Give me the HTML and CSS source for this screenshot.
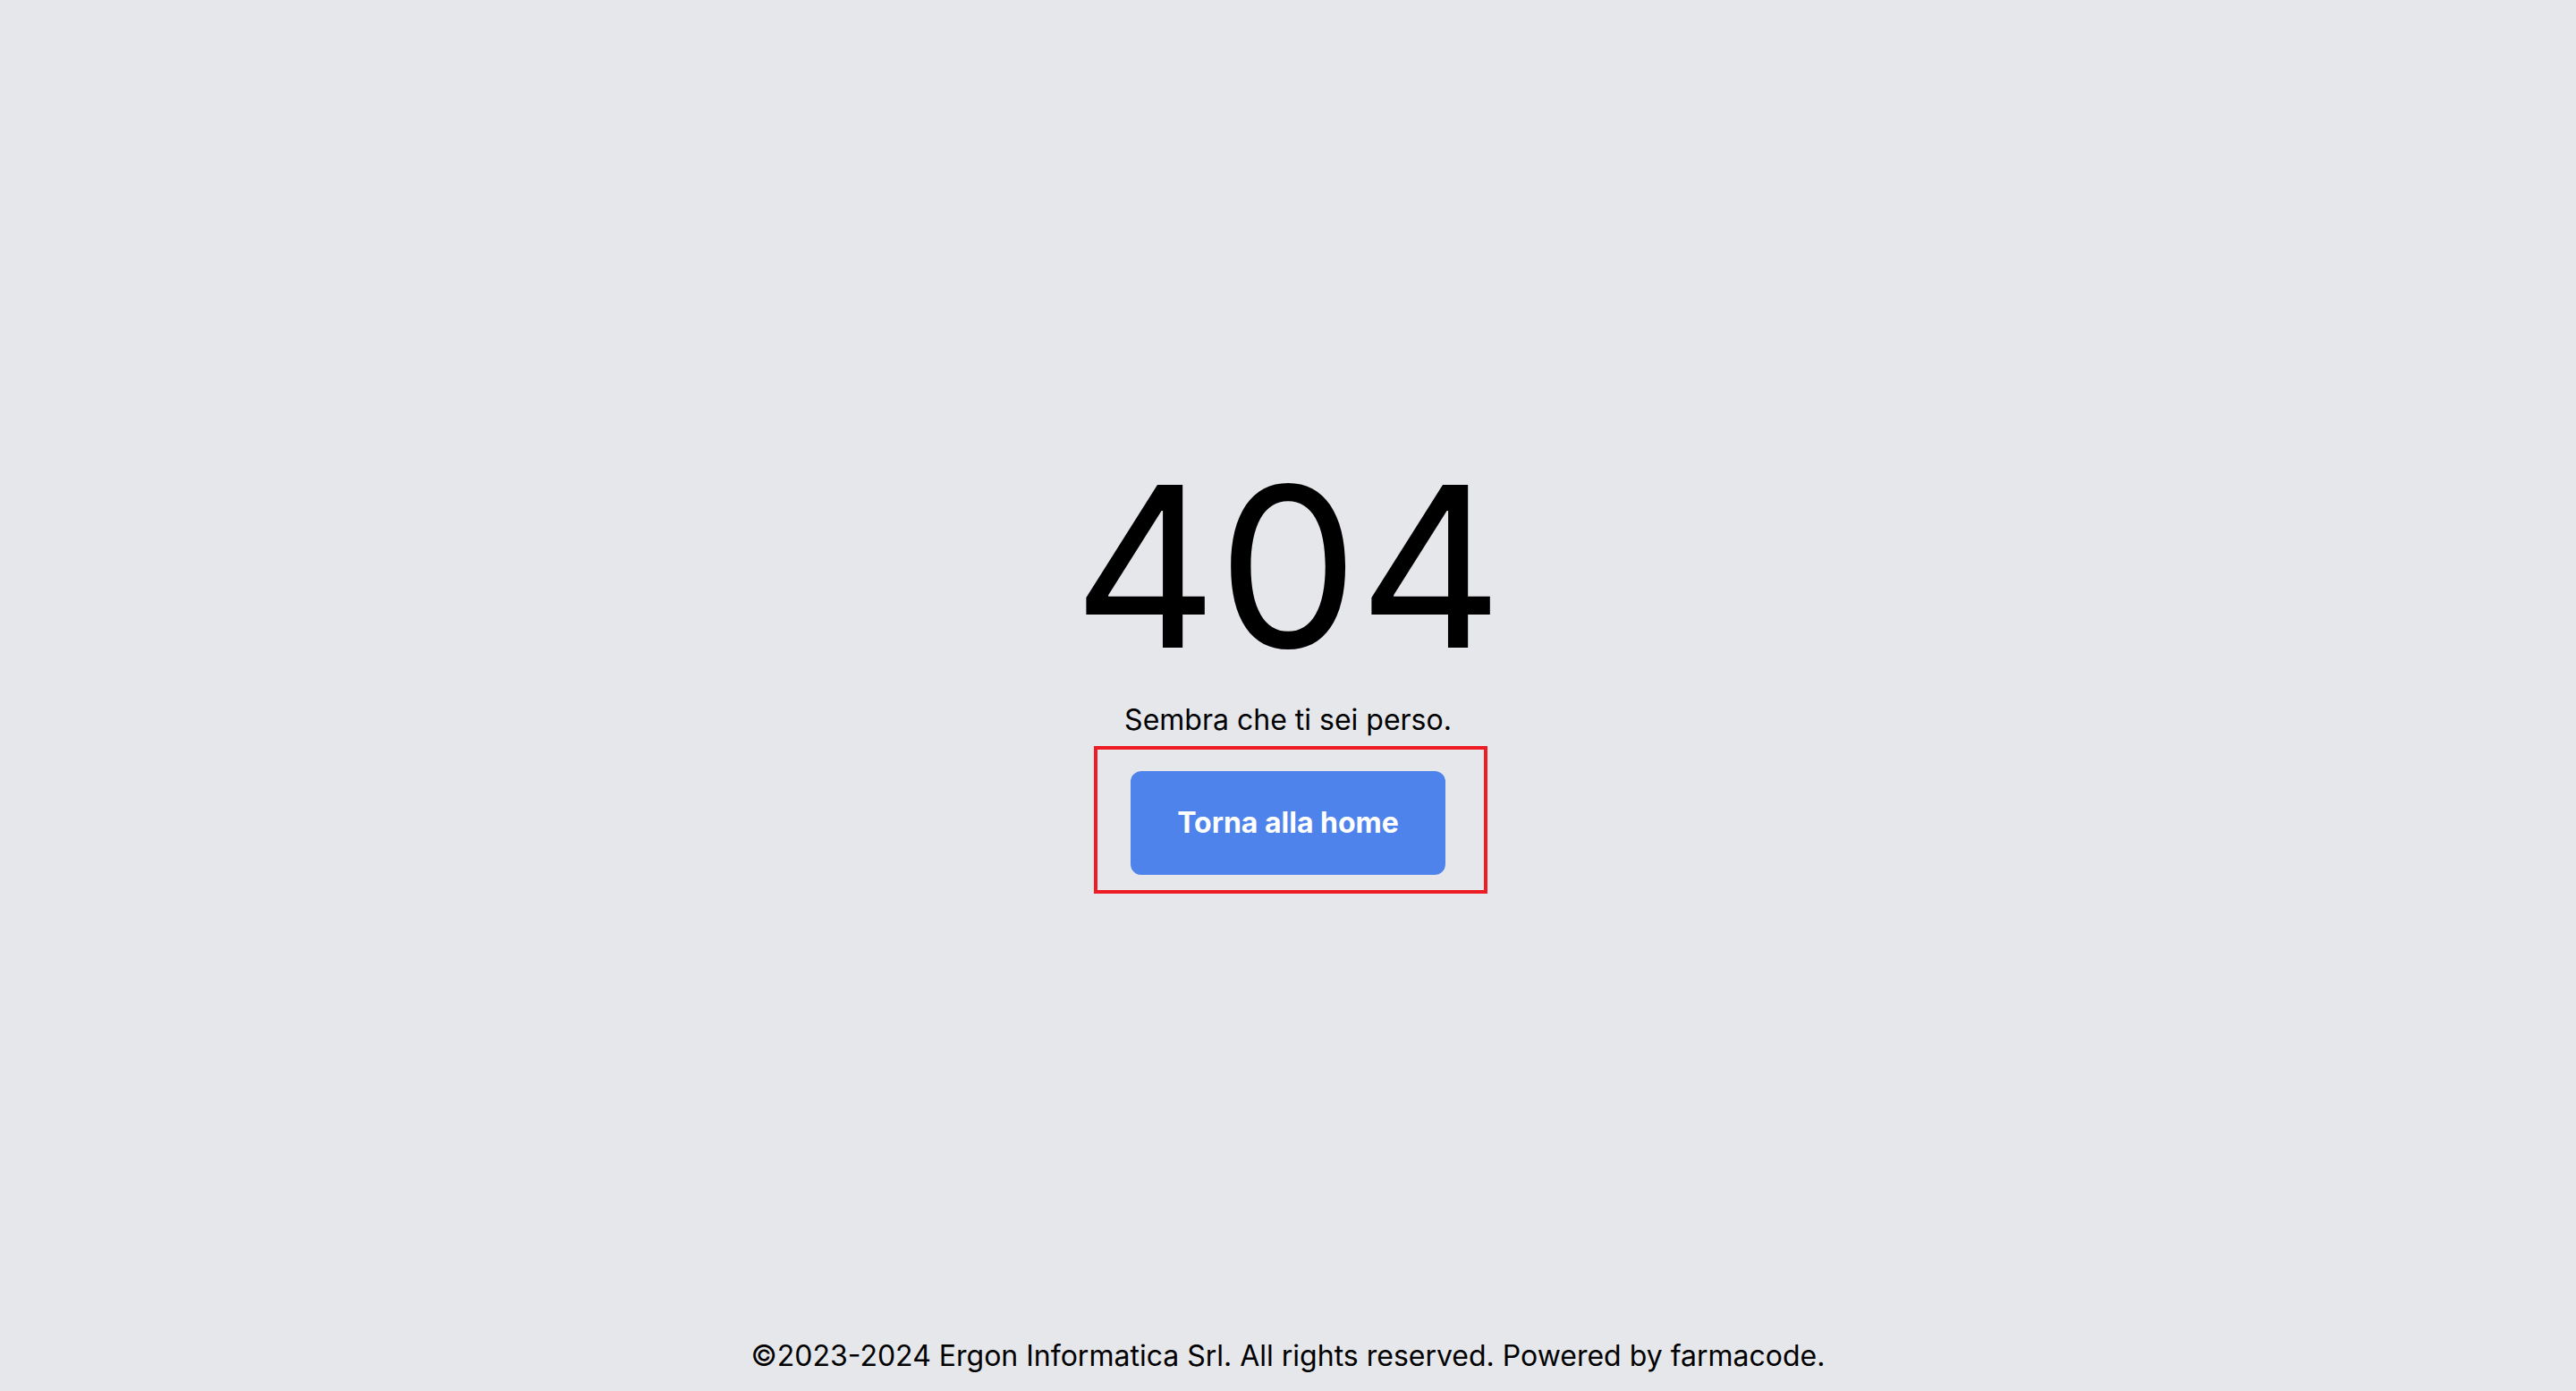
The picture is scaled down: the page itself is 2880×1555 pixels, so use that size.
FILE: index.html
```html
<!DOCTYPE html>
<html lang="it">
<head>
<meta charset="utf-8">
<title>404</title>
<link rel="stylesheet" href="styles.css">
</head>
<body>
<div class="page">
  <main class="main">
    <h1 class="code">404</h1>
    <p class="msg">Sembra che ti sei perso.</p>
    <div class="frame">
      <a class="btn" href="#">Torna alla home</a>
    </div>
  </main>
  <footer class="footer">©2023-2024 Ergon Informatica Srl. All rights reserved. Powered by farmacode.</footer>
</div>
</body>
</html>
```

FILE: styles.css
```css
html, body {
  margin: 0;
  padding: 0;
}
body {
  background: #e5e7eb;
  color: #000;
  font-family: "Inter", "Noto Sans", sans-serif;
}
.page {
  min-height: 100vh;
  display: flex;
  flex-direction: column;
}
.main {
  flex: 1;
  display: flex;
  flex-direction: column;
  align-items: center;
  justify-content: center;
  padding-top: 36px;
}
.code {
  margin: 0;
  font-size: 250px;
  font-weight: 400;
  line-height: 0.8;
}
.msg {
  margin: 51px 0 0;
  font-size: 32px;
  line-height: 1.3;
}
.frame {
  margin: 8px 0 0 6px;
  border: 4px solid #ee1c25;
  padding: 24px 43px 17px 37px;
}
.btn {
  display: flex;
  align-items: center;
  justify-content: center;
  width: 352px;
  height: 116px;
  background: #4f83ec;
  color: #fff;
  border-radius: 12px;
  font-size: 32px;
  font-weight: 700;
  text-decoration: none;
}
.footer {
  text-align: center;
  font-size: 32px;
  line-height: 1.3;
  padding: 0 0 18px;
}
```
